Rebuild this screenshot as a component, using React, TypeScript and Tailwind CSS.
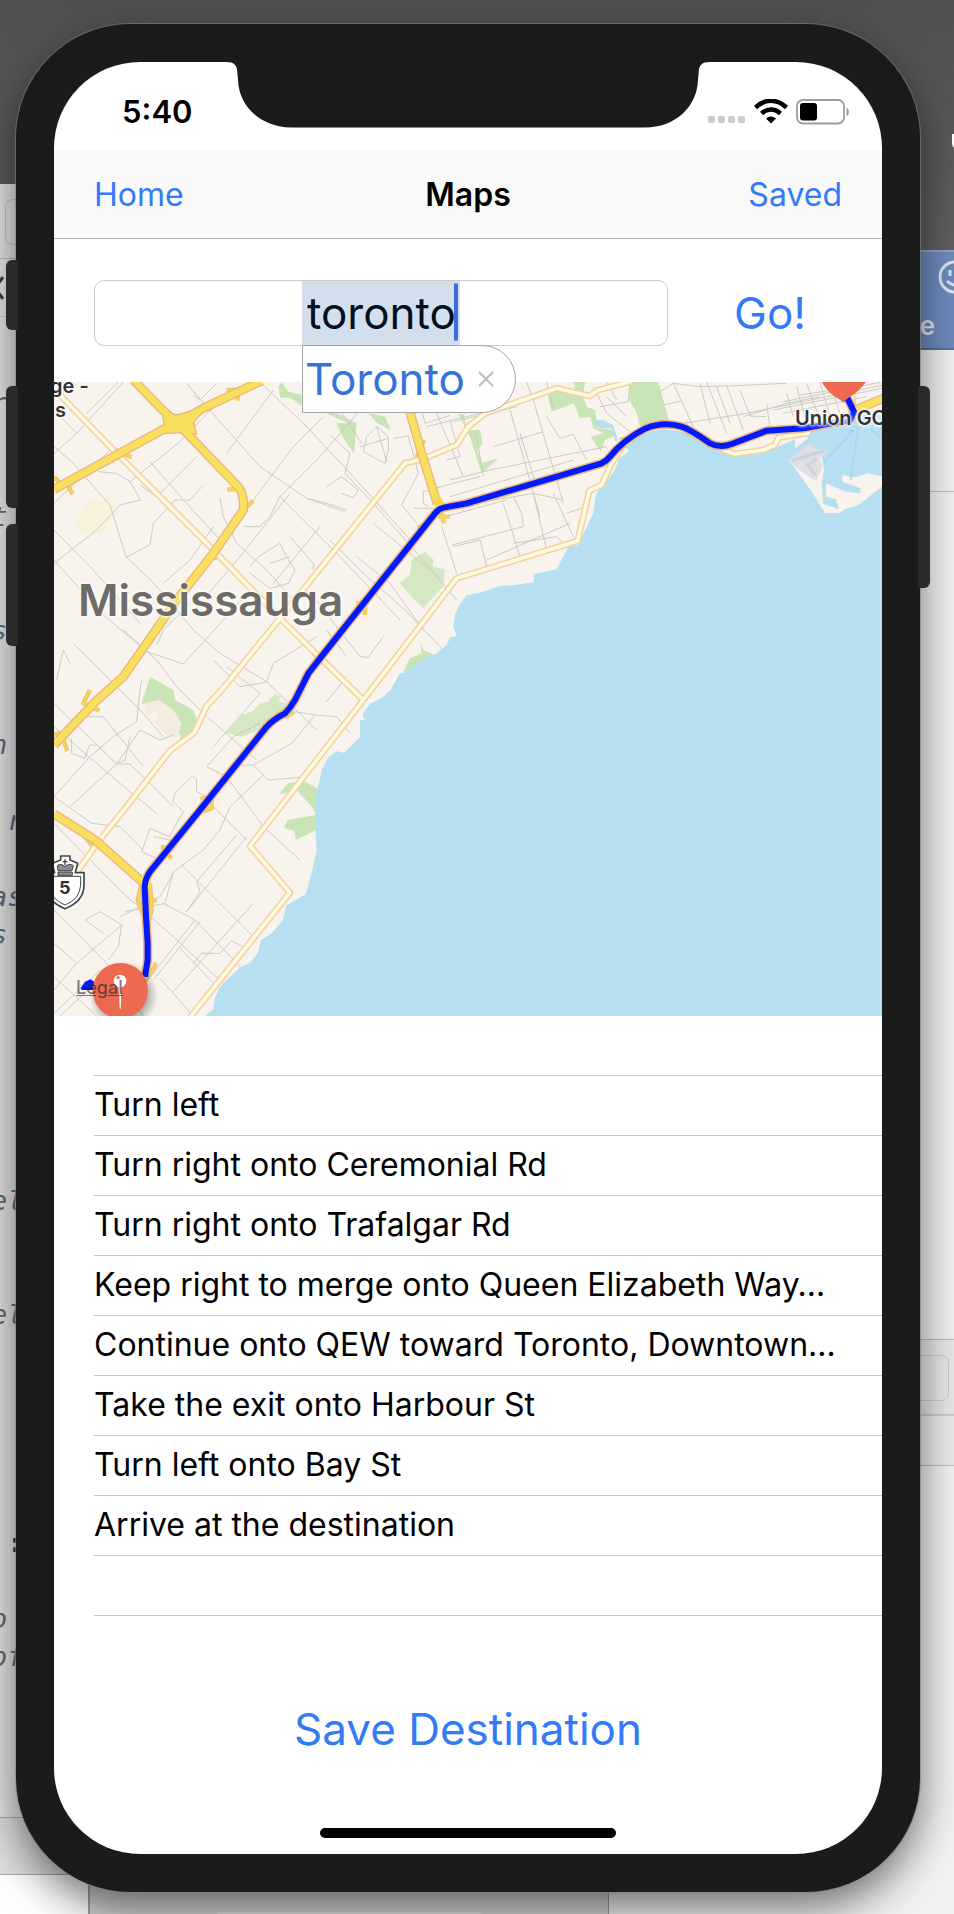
import { X } from "lucide-react";

const steps = [
  "Turn left",
  "Turn right onto Ceremonial Rd",
  "Turn right onto Trafalgar Rd",
  "Keep right to merge onto Queen Elizabeth Way…",
  "Continue onto QEW toward Toronto, Downtown…",
  "Take the exit onto Harbour St",
  "Turn left onto Bay St",
  "Arrive at the destination",
  "",
];

// Code editor lines whose tails peek out behind the phone, keyed by line number.
const editorLines: Record<number, string> = {
  0: "r",
  3: "t",
  6: "s",
  9: "n",
  11: " r",
  13: "as",
  14: "s",
  21: "el",
  24: "el",
  30: " :",
  32: "o",
  33: "of",
};

// Map geometry, three units to a pixel.
const coast =
  "M495 1938L520 1917L526 1880L545 1845L600 1792L632 1778L655 1745L663 1710L695 1690L728 1652L738 1607L797 1572L815 1510L830 1440L827 1400V1280L835 1250L845 1200L866 1160L890 1144L912 1148L960 1102V1050H973L968 1032L990 1002L1030 980L1052 960L1078 912L1100 905L1160 862L1185 855L1220 825L1230 803L1250 798L1240 770L1245 735L1260 702L1280 676L1320 668L1380 648L1420 646L1481 637V612L1550 598L1587 527H1613L1660 430L1668 372L1685 350L1720 312L1738 265L1767 243L1755 232L1790 205L1830 185L1870 178L1930 185L1990 215L2030 240L2085 257L2130 255L2190 240L2265 208V235L2305 205L2292 193L2350 165L2430 150L2530 115V1940Z";

const islands =
  "M2250 275L2290 330L2315 365L2340 405L2355 430H2395L2415 418L2455 405L2528 348V320L2485 310L2445 322L2407 316V335L2462 355L2460 370L2418 365L2358 340V380L2388 388L2397 418L2350 402L2345 340L2352 300L2345 260L2310 222Z";

const route =
  "M315 1820L323 1770V1720L318 1640L314 1550Q315 1528 330 1505L480 1320L600 1170L680 1070Q700 1048 735 1030Q750 1015 765 990L805 910L840 865L1185 430Q1197 416 1210 413L1280 400L1685 280Q1700 273 1710 260Q1750 210 1815 176Q1870 153 1925 170Q1950 178 2010 220Q2040 235 2075 222L2180 182L2290 175L2430 150L2442 125L2420 80";

const highways = [
  "M42 358L370 178L410 160L490 115L665 32",
  "M280 30L370 122L420 168L596 352Q614 375 610 420L520 550L410 690L330 805L250 920L165 996L42 1125",
  "M1108 120L1145 250L1192 402",
  "M42 1332L165 1410L312 1540",
  "M2420 150L2450 118L2530 85",
];

const ramps =
  "M560 60H595L592 92M375 150L380 120M455 150L462 190M225 240L275 262M85 350L98 372M42 320L60 340M562 358H590M615 415L640 392M512 525L525 570M385 668L410 690M948 700H975V735M1205 430L1212 460M1195 440H1228M1135 465L1150 490M1130 262L1152 210M150 960L130 1000L178 1022M70 1110L82 1142M42 1094L65 1088M130 1395L160 1430L190 1412M305 1540L293 1590L312 1640M330 1540L335 1620L325 1660M350 1591H335M345 1778V1788L312 1835M482 1285H515V1315L485 1325M370 1425V1440L395 1465M705 1033L740 1040L762 1025M820 850L850 880M1740 210L1755 205M1640 285H1670M2015 232H2050";

const avenues = [
  "M60 75L220 240L510 530L722 747L970 990",
  "M112 1505L165 1430M185 1403L258 1312L390 1142L463 1088L500 1008L545 960L720 745L1095 280L1145 268L1250 225L1285 170L1335 130L1550 55L1648 78L1675 60L1775 34",
  "M450 1942L750 1568L630 1428L970 990L1250 625L1613 513L1648 362L1685 345L1712 285L1750 225",
  "M2035 235L2085 252L2170 240L2205 225L2215 203L2310 188",
  "M2440 110L2432 60",
];

const streets =
  "M42 120L110 190L42 250M110 190L250 36M140 130L235 36M42 230L95 275L210 405L258 560L342 640L465 785L540 850L680 935L830 1080M42 400L210 240M175 305L230 310L270 335L302 390L240 405L170 480L42 580M270 335L420 215L560 70M300 345L350 380L470 260M258 562L330 525L340 460L405 390H450L490 345M330 275L440 400L540 510M42 570L190 735L320 845L430 882L505 800L640 650M370 640L450 570L520 470M42 480L160 600L300 760M440 40L500 110L660 290L800 385L915 425M460 75L480 90L530 40M500 105L420 180M660 36L800 170L940 320L1120 520M610 470H658L690 440L720 380L840 260L900 190L960 120M640 390L760 230L850 140M700 60L560 250M720 380L900 560L1080 750M800 385L860 400L920 420M870 195L930 250L915 310L1000 400L1140 560L1250 690M905 370L940 383L955 360L905 320L860 350M970 245L980 200L1010 170L1045 200V240L1035 280L970 245M1010 170L1040 275M960 230L1045 205M900 120L965 220M540 385L550 440L590 520L680 600L760 690M630 590L655 560L720 520L740 560L765 600L745 640L690 655L628 608M690 580L750 560M750 370L600 560L480 700M840 470L700 640M870 510L970 610L1095 720L1210 840M1000 460L1170 600M950 560L1050 640L1150 780M820 600V580L750 500M820 680L960 860L985 862L1030 800M860 780L920 860M90 880L70 840L50 930M100 820L200 920L300 1020L370 1100M250 780L350 870L410 950L490 1030L650 1170M350 825L370 780L450 700M520 870L600 950L680 936L700 880L830 800M560 890L660 970L520 1130M305 930L300 960L290 1055L220 1100L150 1160L42 1280M42 1070L100 1120L240 1240L350 1330M95 1105V1150L135 1165L148 1125H170M130 1040H190L310 1190M300 1080L360 1110L400 1095M270 1100L255 1170L230 1182L42 1000M232 1182H270L330 1240L400 1310M42 1280L155 1360L240 1370L310 1440M90 1310L230 1182L300 1080M42 1360L250 1570L400 1700L560 1850M455 1215L470 1230V1265L520 1290M455 1220L405 1270L398 1295L430 1325L388 1400L330 1375L305 1445L370 1475M340 1400L390 1410M500 1190L560 1220L670 1370L780 1470M500 1190L580 1100L660 1060M605 1185H640L755 1120L825 1035L765 1025M825 1035L890 1040L930 1090M640 1185L685 1230L780 1222M860 995L920 920M670 1215L570 1310L540 1380L490 1440L400 1505L375 1600L255 1625M620 1400L440 1625M590 1395L470 1535L480 1565L440 1625M520 1310L620 1410M425 1485L640 1700M400 1510L360 1580L240 1640M370 1600L465 1650L600 1790M480 1655L340 1830M465 1650L300 1860M640 1600L400 1865M420 1735L550 1870M605 1730L575 1712L540 1750H485L460 1780M42 1620L200 1780L310 1938M42 1720L110 1780L42 1860M110 1780L245 1665M135 1650L180 1625L245 1665L235 1730L205 1770M135 1650L190 1690M42 1820L170 1938M60 1938L220 1790M360 1825L460 1938M42 1930L180 1800M1148 130L1155 160L1230 136M1060 205L1105 198L1135 310L1085 405L1130 460M1160 170L1320 130M1190 130L1270 320M1230 150L1260 260L1220 270M1150 365L1240 340L1320 320M1150 365V400L1165 410M1205 470L1250 610M1240 530L1320 510M1215 440L1400 390M1120 415H1180M1310 200L1330 320M1410 120L1500 440M1480 90L1570 400M1360 230L1510 185M1240 155L1430 110M1440 190L1490 350M1230 330L1350 300L1700 230M1230 380L1600 270M1520 140L1560 205L1600 193L1640 270M1250 410L1480 370L1570 390M1235 525L1450 470L1445 430L1420 380M1390 400L1440 560M1480 370L1520 540M1320 510L1340 590M1340 570L1590 460M1580 430L1625 415M1540 370L1600 500M1420 520L1550 500L1580 530M1460 36L1480 90M1520 36L1540 120M1660 50L1700 130L1770 185M1680 110L1765 95L1770 36M1700 36L1730 90M1700 80L1760 140M1860 65L1900 40L1980 50L2060 48L2240 40M1870 105L1925 93M1900 40L1960 170M1980 40L2010 160M2000 36L2060 190M2030 50L2070 160M2060 48L2110 180M2100 60L2130 138L2180 140M1900 165L2120 130L2530 45M2110 140L2240 100L2340 80M2180 100L2190 175M2240 70L2260 140M2270 50L2300 160M2300 40L2340 150M2340 36L2370 140M2370 40L2400 130M2230 95L2526 36M2200 120L2526 55M2230 130L2480 80M2280 75L2380 60";

const parks = [
  "M715 50L725 36L745 65L785 75V108L755 85L720 82Z",
  "M855 128L890 130L950 160L942 250L910 205L888 158L925 160Z",
  "M985 128L1035 140L1052 180L1010 158Z",
  "M1255 132H1272L1280 180H1320L1328 220L1312 240L1325 280L1375 265L1325 310L1290 200Z",
  "M1522 72L1560 65L1600 75L1605 45L1595 36H1635L1630 80L1640 110L1665 120L1675 175L1722 180L1728 195L1695 210L1682 245L1652 200L1690 190L1660 175L1650 140L1620 145L1608 115L1600 100L1535 125Z",
  "M1768 36H1855L1888 155L1850 155L1800 168L1790 130L1768 90Z",
  "M1725 300L1745 318L1740 345L1720 335L1735 370L1715 412H1700L1710 375L1685 350Z",
  "M1760 305L1778 325L1745 328Z",
  "M1140 812L1150 840L1190 858L1145 885V918L1115 922L1090 905L1110 865L1145 850Z",
  "M330 920L400 960L405 990L460 1020L475 1060L465 1100L425 1110L390 1030L305 1000Z",
  "M715 1275L745 1240L790 1232L832 1255V1340L815 1310L770 1260Z",
  "M732 1375L742 1350L828 1335V1380L768 1410L762 1382Z",
];

const paleParks = [
  "M1155 545L1180 568L1178 590L1215 598L1210 650L1185 675L1150 715L1115 680L1078 638L1110 615L1115 570Z",
  "M558 1088L605 1035L640 1022L660 1000L685 995L705 970L722 980L715 995L742 1000L700 1065L605 1100Z",
];

function RouteMap() {
  return (
    <section aria-label="Route map" className="relative h-[634px] overflow-hidden bg-[#f8f4ed]">
      <svg
        viewBox="42 36 2484 1902"
        preserveAspectRatio="xMidYMid slice"
        className="block h-full w-full"
        fill="none"
        strokeLinejoin="round"
        aria-hidden="true"
      >
        <defs>
          <radialGradient id="pin-shadow">
            <stop offset="0.6" stopColor="#000" stopOpacity="0.35" />
            <stop offset="1" stopColor="#000" stopOpacity="0" />
          </radialGradient>
        </defs>
        <path d="M102 462L125 420L160 382L175 395L200 378L240 420L205 460L180 495L150 485L130 492Z" fill="#f9f1dc" />
        {parks.map((d) => (
          <path key={d} d={d} fill="#c9e4b7" />
        ))}
        {paleParks.map((d) => (
          <path key={d} d={d} fill="#d5e8c4" />
        ))}
        <path d="M315 998L360 990L400 1020L425 1060L412 1105L380 1095L345 1060L315 1035Z" fill="#f5ece0" />
        <path d="M328 1035L342 1020L357 1035L342 1055Z" fill="#f8f4ed" />
        <path d={streets} stroke="#cbcac6" strokeWidth="3" />
        <path d={coast} fill="#b6dff1" />
        <path d="M1660 150L1690 150L1720 165L1735 215L1725 212L1715 175L1680 175Z" fill="#b6dff1" />
        <path d={islands} fill="#f8f4ed" />
        <path d="M2243 272L2310 218L2327 238H2360V250L2340 265L2348 290L2330 330L2315 328Z" fill="#dfe0e5" />
        <path d="M2255 272L2352 242M2300 280L2325 315M2330 265L2300 290" stroke="#cfd2d9" strokeWidth="10" />
        <path d="M2455 165L2432 330M2440 180L2352 278M2490 175L2526 205" stroke="#a6d4ee" strokeWidth="4" />
        <path d={ramps} stroke="#eebb7c" strokeWidth="13" />
        <path d={ramps} stroke="#f6d553" strokeWidth="8" />
        {avenues.map((d) => (
          <path key={d} d={d} stroke="#f3cfa4" strokeWidth="20" />
        ))}
        {avenues.map((d) => (
          <path key={d} d={d} stroke="#fdfbdc" strokeWidth="11" />
        ))}
        {highways.map((d) => (
          <path key={d} d={d} stroke="#ebb583" strokeWidth="28" />
        ))}
        <path d="M365 120L375 178L350 192L420 188L470 192L460 160L500 110L410 135Z" fill="#f8df5c" stroke="#ebb583" strokeWidth="4" />
        <path d={route} stroke="#ecb77e" strokeWidth="27" />
        {highways.map((d) => (
          <path key={d} d={d} stroke="#f8df5c" strokeWidth="20" />
        ))}
        <path d="M1178 385L1200 378L1218 408L1190 418Z" fill="#f6d553" />
        <path d="M305 1518H332V1560H305Z" fill="#f6d553" />
        <path d={route} stroke="#0319ff" strokeWidth="18" />

        <path d="M122 1855L135 1835L152 1828L162 1835V1860H125Z" fill="#0319ff" />
        <circle cx="250" cy="1876" r="104" fill="url(#pin-shadow)" />
        <circle cx="241" cy="1862" r="83" fill="#ee6951" />
        <circle cx="240" cy="1833" r="19" fill="#fff" />
        <circle cx="234" cy="1823" r="5" fill="#ee6951" />
        <path d="M236 1850H244L242 1916H239Z" fill="#fff" />

        <path d="M2345 36Q2365 70 2392 84Q2406 92 2410 98Q2415 90 2428 82Q2455 66 2478 36Z" fill="#ee6951" />

        <g stroke="#414448" strokeWidth="5" fill="#fff">
          <path d="M62 1465V1458H90V1470L113 1480L106 1508H132V1545Q132 1594 75 1616Q18 1594 18 1545V1508H44L36 1480L62 1470Z" />
          <path d="M27 1519H122V1545Q120 1587 75 1605Q30 1587 27 1545Z" strokeWidth="3" />
        </g>
        <path d="M52 1487Q62 1478 75 1490Q88 1478 100 1487L96 1502H54ZM54 1506H97V1516H54Z" fill="#8b8d90" stroke="#414448" strokeWidth="3" />
        <path d="M75 1468V1486M68 1475H82" stroke="#414448" strokeWidth="4" />
      </svg>
      <span className="absolute -top-2 -left-1 text-[20px] leading-6 font-semibold whitespace-nowrap text-[#333] [text-shadow:0_0_2px_#fff,0_0_3px_#fff,0_0_4px_#fff]">
        ge -
        <br />
        &nbsp;s
      </span>
      <span className="absolute top-[192px] left-6 text-[44px] leading-[52px] font-semibold text-[#6f6b66] [text-shadow:0_0_2px_#fff,0_0_3px_#fff,0_0_4px_#fff]">
        Mississauga
      </span>
      <span className="absolute top-6 left-[741px] text-[20px] leading-6 font-semibold whitespace-nowrap text-[#333] [text-shadow:0_0_2px_#fff,0_0_3px_#fff,0_0_4px_#fff,0_0_5px_#fff]">
        Union GO
      </span>
      <span className="absolute top-[494px] left-[5px] text-[18px] leading-6 font-bold text-[#333]">5</span>
      <a href="#legal" className="absolute top-[594px] left-[22px] text-[18px] leading-6 font-medium text-[#222]/60 underline">
        Legal
      </a>
    </section>
  );
}

function StatusBar() {
  return (
    <div className="flex h-[88px] items-center justify-between pt-3 pr-8 pl-[68px]">
      <time className="text-[31px] leading-9 font-semibold">5:40</time>
      <svg width="142" height="26" viewBox="0 0 142 26" fill="none" aria-label="Wi-Fi connected, battery low">
        <g fill="#cbcbcb">
          <rect x="0" y="17" width="7" height="7" rx="2" />
          <rect x="10" y="17" width="7" height="7" rx="2" />
          <rect x="20" y="17" width="7" height="7" rx="2" />
          <rect x="30" y="17" width="7" height="7" rx="2" />
        </g>
        <path d="M47.500 8.500C57 -.5 69 -.5 78.500 8.500" stroke="#000" strokeWidth="4.500" />
        <path d="M53.500 14.500C59.500 9.300 66.500 9.300 72.500 14.500" stroke="#000" strokeWidth="4.500" />
        <path d="M58 19.500Q63 15.500 68 19.500L63 24.500Z" fill="#000" />
        <rect x="89" y="1" width="47" height="23.500" rx="6" stroke="#9d9d9d" strokeWidth="1.800" />
        <rect x="92" y="4" width="17" height="17.500" rx="3" fill="#000" />
        <path d="M138.500 8.500Q141 10 141 13Q141 16 138.500 17Z" fill="#9d9d9d" />
      </svg>
    </div>
  );
}

function Desktop() {
  return (
    <div aria-hidden="true" className="absolute inset-0 overflow-hidden bg-[#585858] bg-linear-to-b from-[#505050] to-[#686868] to-20%">
      <div className="absolute top-[134px] right-[-12px] h-4 w-[14px] rounded-b-lg border-2 border-white" />

      <div className="absolute top-[184px] bottom-[39px] left-0 w-1/2 bg-[#e6e6e6]">
        <div className="h-[75px] border-b border-[#c3c3c3] pt-[15px] pl-[5px]">
          <div className="h-[46px] w-20 rounded-lg border border-[#c6c6c6]" />
        </div>
        <div className="h-[58px] border-b border-[#cdcdcd] pt-2">
          <svg width="8" height="42" viewBox="0 0 8 42" fill="none" stroke="#3d3d3d" strokeWidth="3">
            <path d="M3 10L-5 21L3 32" />
          </svg>
        </div>
        <pre className="-ml-[9px] pt-[67px] font-['DejaVu_Sans_Mono',monospace] text-[27px] leading-[38px] text-[#5d6c7d] italic">
          {Array.from({ length: 36 }, (_, i) => (
            <div key={i} className={i === 30 ? "h-[38px] font-bold text-[#333] not-italic" : "h-[38px]"}>
              {editorLines[i] ?? ""}
            </div>
          ))}
        </pre>
      </div>
      <div className="absolute bottom-[39px] left-0 h-[58px] w-1/2 border-y border-[#aaa] bg-[#dedede]" />

      <div className="absolute top-[250px] right-0 flex h-[100px] w-40 flex-col items-end border-t-2 border-b-2 border-t-[#8ea5c8] border-b-[#5b7198] bg-[#6d8bbd] pt-2">
        <svg width="16" height="34" viewBox="0 0 16 34" fill="none" stroke="#dfe5ef" strokeWidth="3">
          <circle cx="17" cy="17" r="15" />
          <path d="M12 10V16M22 10V16M9 21Q17 29 25 21" />
        </svg>
        <span className="mt-4 mr-[19px] text-[26px] leading-8 font-semibold text-[#dfe5ef]">re</span>
      </div>
      <div className="absolute top-[350px] right-0 bottom-0 w-[346px] bg-[#f2f2f2]">
        <div className="h-[142px] border-b border-[#c2c2c2]" />
        <div className="h-[848px] border-b border-[#bdbdbd]" />
        <div className="flex h-[76px] justify-end border-b-2 border-[#cfcfcf] bg-[#e9e9e9] pt-[15px] pr-[5px]">
          <div className="h-[46px] w-20 rounded-lg border border-[#cbcbcb]" />
        </div>
        <div className="h-[50px] border-b border-[#bdbdbd] bg-[#ececec]" />
      </div>
      <div className="absolute bottom-0 left-0 flex h-[39px] w-[609px]">
        <div className="w-[90px] border-r-2 border-[#a0a0a0] bg-white" />
        <div className="flex flex-1 items-end justify-center border-r border-[#999] bg-[#d4d4d4]">
          <div className="h-[2px] w-[264px] rounded-t bg-[#e0e0e0]" />
        </div>
      </div>
    </div>
  );
}

export default function App() {
  return (
    <div className="relative min-h-screen overflow-hidden pt-6 pr-[34px] pb-[22px] pl-4 font-[Inter,'Liberation_Sans',sans-serif] text-black">
      <Desktop />

      <div className="relative rounded-[114px] bg-[#1b1b1b] p-[38px] shadow-[0_0_0_1px_rgba(130,130,130,0.6),0_16px_44px_rgba(0,0,0,0.55)]">
        <div className="absolute top-[236px] -left-[10px] flex flex-col">
          <div className="h-[70px] w-3 rounded-l-md bg-[#2b2b2b]" />
          <div className="mt-14 h-[122px] w-3 rounded-l-md bg-[#2b2b2b]" />
          <div className="mt-4 h-[122px] w-3 rounded-l-md bg-[#2b2b2b]" />
        </div>
        <div className="absolute top-[362px] -right-[10px] h-[202px] w-3 rounded-r-md bg-[#2b2b2b]" />

        <main className="relative overflow-hidden rounded-[86px] bg-white">
          <div className="absolute inset-x-0 top-0 flex justify-center">
            <svg width="484" height="66" viewBox="0 0 484 66" aria-hidden="true">
              <path
                d="M0 0C8 0 11 3 11.300 10L12 18C13 45 35 65 65 65.500H419C449 65.500 471 45 472 18L472.700 10C473 3 476 0 484 0Z"
                fill="#1b1b1b"
              />
            </svg>
          </div>

          <StatusBar />

          <nav className="grid h-[89px] grid-cols-3 items-center border-b border-[#b2b2b2] bg-[#f9f9f9] px-10 pt-px text-[32px] leading-10">
            <button type="button" className="justify-self-start text-[#337bf6]">
              Home
            </button>
            <h1 className="justify-self-center font-semibold">Maps</h1>
            <button type="button" className="justify-self-end text-[#337bf6]">
              Saved
            </button>
          </nav>

          <form className="flex px-10 pt-[41px] pb-9" onSubmit={(event) => event.preventDefault()}>
            <div className="flex h-[66px] flex-1 justify-center rounded-[10px] border border-[#cbcbcb]">
              <div className="relative h-16">
                <input
                  aria-label="Destination"
                  type="text"
                  defaultValue="toronto"
                  className="h-full w-[158px] bg-[#d4dfed] pl-[5px] text-[44px] text-[#02101f] outline-none"
                />
                <span className="absolute top-[2px] right-[2px] h-[58px] w-1 rounded-full bg-[#4169df]" />
                <div className="absolute top-full left-0 z-10 flex h-[68px] w-[214px] items-center gap-2 rounded-r-[34px] border border-[#a5a5a5] bg-white pl-[2px]">
                  <button type="button" className="text-[44px] leading-[56px] text-[#3573d9]">
                    Toronto
                  </button>
                  <button type="button" aria-label="Dismiss suggestion" className="text-[#bfbfbf]">
                    <X size={26} strokeWidth={2} />
                  </button>
                </div>
              </div>
            </div>
            <button type="submit" className="w-[174px] pl-[30px] text-[44px] leading-[64px] text-[#337bf6]">
              Go!
            </button>
          </form>

          <RouteMap />

          <ol className="mt-[59px] ml-10 border-b border-[#c8c7cc]">
            {steps.map((step, index) => (
              <li key={index} className="h-[60px] truncate border-t border-[#c8c7cc] pr-6 text-[32px] leading-[58px]">
                {step}
              </li>
            ))}
          </ol>

          <div className="flex flex-col items-center pt-[83px] pb-4">
            <button type="button" className="text-[44px] leading-[60px] text-[#337bf6]">
              Save Destination
            </button>
            <div className="mt-[69px] h-[10px] w-[296px] rounded-full bg-black" />
          </div>
        </main>
      </div>
    </div>
  );
}
